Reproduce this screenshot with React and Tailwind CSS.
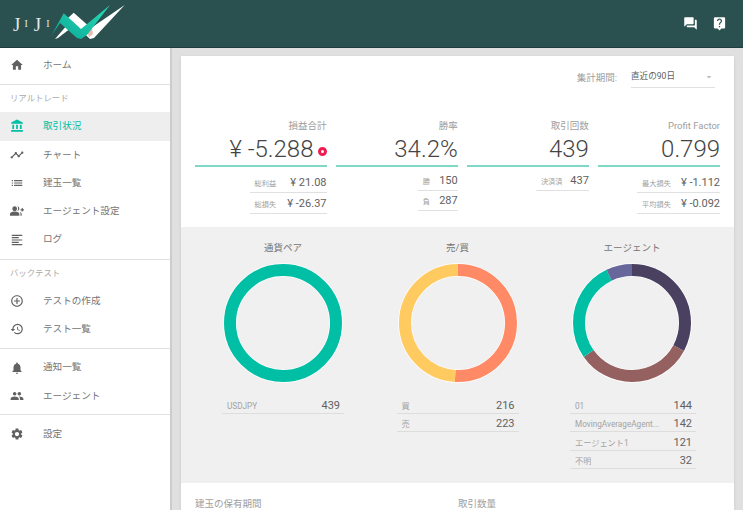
import React from "react";
import {
  MdHome,
  MdAccountBalance,
  MdTimeline,
  MdList,
  MdGroupAdd,
  MdFormatAlignLeft,
  MdAddCircleOutline,
  MdHistory,
  MdNotifications,
  MdPeople,
  MdSettings,
  MdQuestionAnswer,
  MdLiveHelp,
  MdArrowDropDown,
} from "react-icons/md";

const fontStack = { fontFamily: "Roboto, 'Noto Sans CJK JP', sans-serif" };

function Logo() {
  return (
    <div className="flex items-center pl-[13px] h-full">
      <span className="flex items-center w-[36px] gap-[4px] mt-[1px] text-[#dfe8e8] font-['Liberation_Serif',serif] leading-none">
        <span className="text-[19px]">J</span>
        <span className="text-[10px]">I</span>
        <span className="text-[19px] ml-[2px]">J</span>
        <span className="text-[10px] ml-[1px]">I</span>
      </span>
      <svg width="76" height="47" viewBox="37 0 76 47" className="shrink-0">
        <defs>
          <linearGradient id="teal" x1="0" y1="1" x2="1" y2="0">
            <stop offset="0" stopColor="#0c6f6a" />
            <stop offset="0.25" stopColor="#12b5a0" />
            <stop offset="1" stopColor="#26dcb4" />
          </linearGradient>
        </defs>
        <polygon points="43,39 56,24 59,28 46,38" fill="#ffffff" />
        <polygon points="61.7,12.7 79,28 112.7,5 82,38 78,39 56,18" fill="#ffffff" />
        <polygon points="74,30 80,28 81,34 77,37" fill="#e8bcae" />
        <polygon
          points="51.7,13.3 69,29 98,5 75,35 69,39 65,38 48,23 38,38"
          fill="url(#teal)"
        />
      </svg>
    </div>
  );
}

function Header() {
  return (
    <header className="h-[48px] shrink-0 bg-[#2b5050] flex items-center justify-between border-b border-[#1f3d3d]">
      <Logo />
      <div className="flex items-center gap-[14px] pr-[16px] text-white">
        <MdQuestionAnswer size={15} />
        <MdLiveHelp size={15} />
      </div>
    </header>
  );
}

function NavItem({ icon: Icon, label, active }) {
  return (
    <div
      className={`h-[28.3px] flex items-center pl-[10px] text-[9.6px] ${
        active ? "bg-[#eeeeee] text-[#00bfa5]" : "text-[#757575]"
      }`}
    >
      <Icon size={14} className={active ? "text-[#00bfa5]" : "text-[#616161]"} />
      <span className="ml-[19px]">{label}</span>
    </div>
  );
}

function SectionLabel({ children }) {
  return <div className="h-[26px] flex items-center pl-[10px] text-[8.4px] text-[#aaaaaa]">{children}</div>;
}

function Sidebar() {
  return (
    <aside className="w-[172px] shrink-0 bg-white border-r-2 border-[#cccccc] pt-[3px] h-full">
      <NavItem icon={MdHome} label="ホーム" />
      <div className="h-px bg-[#e0e0e0] mt-[5px]" />
      <SectionLabel>リアルトレード</SectionLabel>
      <div className="mt-[1px]">
        <NavItem icon={MdAccountBalance} label="取引状況" active />
        <NavItem icon={MdTimeline} label="チャート" />
        <NavItem icon={MdList} label="建玉一覧" />
        <NavItem icon={MdGroupAdd} label="エージェント設定" />
        <NavItem icon={MdFormatAlignLeft} label="ログ" />
      </div>
      <div className="h-px bg-[#e0e0e0] mt-[5px]" />
      <div className="pt-[1px]">
        <SectionLabel>バックテスト</SectionLabel>
      </div>
      <NavItem icon={MdAddCircleOutline} label="テストの作成" />
      <NavItem icon={MdHistory} label="テスト一覧" />
      <div className="h-px bg-[#e0e0e0] mt-[5px] mb-[4px]" />
      <NavItem icon={MdNotifications} label="通知一覧" />
      <NavItem icon={MdPeople} label="エージェント" />
      <div className="h-px bg-[#e0e0e0] mt-[4px] mb-[5px]" />
      <NavItem icon={MdSettings} label="設定" />
    </aside>
  );
}

function SubRow({ label, value, compact }) {
  return (
    <div
      className={`flex items-end justify-between gap-[4px] whitespace-nowrap border-b border-[#e0e0e0] pb-[2px] pl-[5px] ${
        compact ? "h-[20px]" : "h-[21px]"
      }`}
    >
      <span className="text-[7.2px] text-[#9e9e9e] leading-[13px]">{label}</span>
      <span className="text-[11px] text-[#616161] leading-[14px]">{value}</span>
    </div>
  );
}

function Stat({ title, value, mark, rows, compact, rowWidth }) {
  return (
    <div>
      <div className="text-right text-[9.5px] text-[#9e9e9e] leading-[14px]">{title}</div>
      <div className="h-[32px] flex items-center justify-end text-[24px] font-light text-[#444444] leading-[32px]">
        <span>{value}</span>
        {mark && (
          <span className="ml-[4px] mt-[4px] w-[9px] h-[9px] rounded-full border-[3px] border-[#ee1c50] bg-white" />
        )}
      </div>
      <div className="h-[2px] bg-[#80d8c8]" />
      <div className={`flex justify-end ${compact ? "mt-[4px]" : "mt-[5px]"}`}>
        <div className={rowWidth}>
          {rows.map((r) => (
            <SubRow key={r.label} label={r.label} value={r.value} compact={compact} />
          ))}
        </div>
      </div>
    </div>
  );
}

function Donut({ data }) {
  const total = data.reduce((s, d) => s + d.value, 0);
  const r = 53;
  const c = 2 * Math.PI * r;
  let offset = 0;
  return (
    <svg width="120" height="120" viewBox="0 0 120 120" className="mx-auto block">
      <circle cx="60" cy="60" r={r} fill="none" stroke="#ffffff" strokeWidth="13.5" />
      {data.map((d) => {
        const len = (d.value / total) * c;
        const el = (
          <circle
            key={d.color}
            cx="60"
            cy="60"
            r={r}
            fill="none"
            stroke={d.color}
            strokeWidth="12"
            strokeDasharray={`${len} ${c - len}`}
            strokeDashoffset={-offset}
            transform="rotate(-90 60 60)"
          />
        );
        offset += len;
        return el;
      })}
    </svg>
  );
}

function ChartCol({ title, data, rows, tableClass }) {
  return (
    <div className="w-[120px]">
      <div className="text-center text-[9.5px] text-[#757575] leading-[14px] mb-[8px]">{title}</div>
      <Donut data={data} />
      <div className={`mt-[12px] ${tableClass}`}>
        {rows.map((r) => (
          <div
            key={r.label}
            className="h-[18.5px] flex items-end justify-between border-b border-[#dddddd] pl-[5px] pr-[4px]"
          >
            <span className="text-[8.2px] text-[#a3a3a3] leading-[13px] truncate max-w-[92px]">{r.label}</span>
            <span className="text-[11px] text-[#616161] leading-[14px]">{r.value}</span>
          </div>
        ))}
      </div>
    </div>
  );
}

function Dashboard() {
  return (
    <main className="bg-white w-[553px] mt-[8px] ml-[9px] shrink-0 shadow-sm">
      <div className="h-[56px] flex justify-end items-start pt-[10px] pr-[19px]">
        <span className="text-[9.5px] text-[#9e9e9e] mt-[5px] mr-[14px]">集計期間:</span>
        <div className="w-[84px] h-[22px] flex items-center justify-between border-b border-[#e0e0e0] text-[8.6px] text-[#616161]">
          <span>直近の90日</span>
          <MdArrowDropDown size={12} className="text-[#bdbdbd]" />
        </div>
      </div>
      <div className="h-[115px] pt-[7px] px-[14px] grid grid-cols-[131.5px_122px_122px_122px] gap-x-[9.2px]">
        <Stat
          title="損益合計"
          value="¥ -5.288"
          mark
          rowWidth="w-[77px]"
          rows={[
            { label: "総利益", value: "¥ 21.08" },
            { label: "総損失", value: "¥ -26.37" },
          ]}
        />
        <Stat
          title="勝率"
          value="34.2%"
          compact
          rowWidth="w-[40px]"
          rows={[
            { label: "勝", value: "150" },
            { label: "負", value: "287" },
          ]}
        />
        <Stat title="取引回数" value="439" compact rowWidth="w-[53px]" rows={[{ label: "決済済", value: "437" }]} />
        <Stat
          title="Profit Factor"
          value="0.799"
          rowWidth="w-[83px]"
          rows={[
            { label: "最大損失", value: "¥ -1.112" },
            { label: "平均損失", value: "¥ -0.092" },
          ]}
        />
      </div>
      <div className="h-[256px] bg-[#f0f0f0] pt-[14px] pl-[42px] flex gap-x-[54.5px]">
        <ChartCol
          title="通貨ペア"
          tableClass="-mx-[1px]"
          data={[{ value: 439, color: "#00bfa5" }]}
          rows={[{ label: "USDJPY", value: "439" }]}
        />
        <ChartCol
          title="売/買"
          tableClass="-mx-[1px]"
          data={[
            { value: 223, color: "#ff8a65" },
            { value: 216, color: "#ffca5f" },
          ]}
          rows={[
            { label: "買", value: "216" },
            { label: "売", value: "223" },
          ]}
        />
        <ChartCol
          title="エージェント"
          tableClass="-ml-[2px] -mr-[4px]"
          data={[
            { value: 144, color: "#4a4060" },
            { value: 142, color: "#956060" },
            { value: 121, color: "#00bfa5" },
            { value: 32, color: "#67679b" },
          ]}
          rows={[
            { label: "01", value: "144" },
            { label: "MovingAverageAgent...", value: "142" },
            { label: "エージェント1", value: "121" },
            { label: "不明", value: "32" },
          ]}
        />
      </div>
      <div className="grid grid-cols-[263px_1fr] px-[14px] pt-[14px] text-[9.5px] text-[#9e9e9e] leading-[14px]">
        <span>建玉の保有期間</span>
        <span>取引数量</span>
      </div>
    </main>
  );
}

export default function App() {
  return (
    <div className="h-[510px] w-[743px] overflow-hidden bg-[#e0e0e0] flex flex-col" style={fontStack}>
      <Header />
      <div className="flex flex-1 min-h-0">
        <Sidebar />
        <Dashboard />
      </div>
    </div>
  );
}
